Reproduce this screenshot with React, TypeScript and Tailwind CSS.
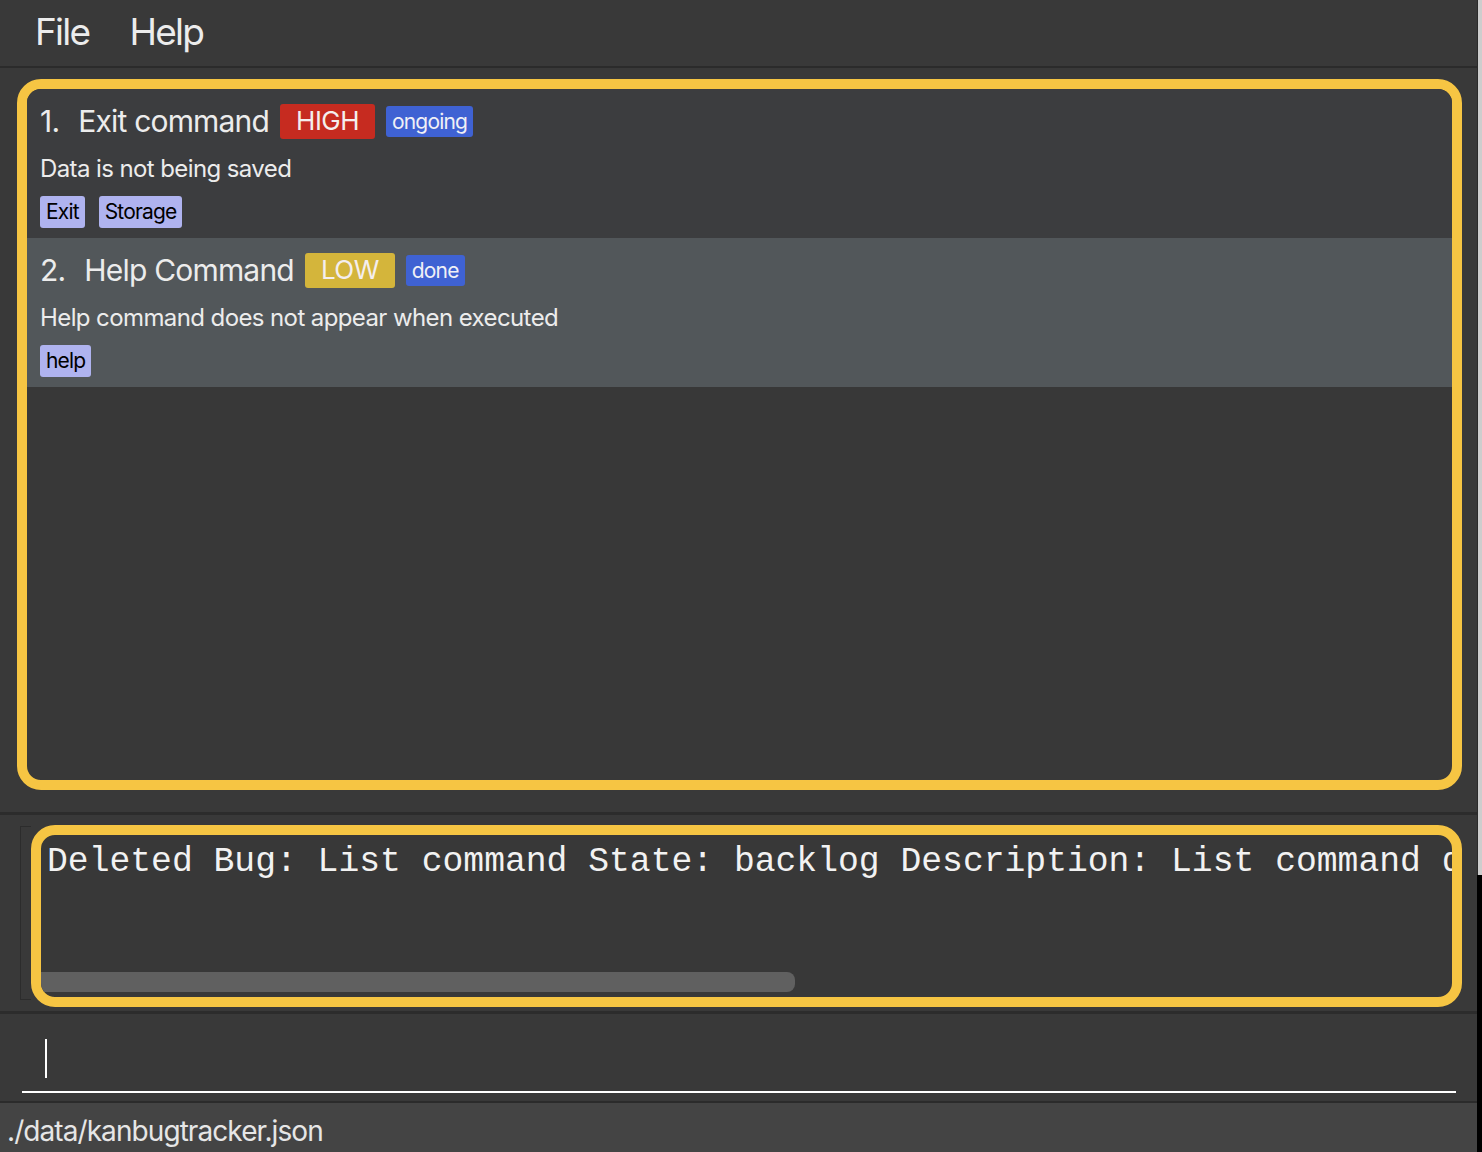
import React from "react";

type Bug = {
  index: number;
  title: string;
  priority: "HIGH" | "LOW";
  state: string;
  description: string;
  tags: string[];
};

const bugs: Bug[] = [
  {
    index: 1,
    title: "Exit command",
    priority: "HIGH",
    state: "ongoing",
    description: "Data is not being saved",
    tags: ["Exit", "Storage"],
  },
  {
    index: 2,
    title: "Help Command",
    priority: "LOW",
    state: "done",
    description: "Help command does not appear when executed",
    tags: ["help"],
  },
];

const sans = "font-['Inter','Noto_Sans',sans-serif]";
const mono = "font-['Liberation_Mono','DejaVu_Sans_Mono',monospace]";

function BugCard({ bug, odd }: { bug: Bug; odd: boolean }) {
  return (
    <div
      className={`flex flex-col pl-[13px] pt-[15px] pb-[10px] ${
        odd ? "bg-[#3c3d3f]" : "bg-[#52575a]"
      }`}
    >
      {/* title row */}
      <div className="flex h-[35px] items-center">
        <span className="text-[30px] leading-none tracking-[-0.027em] text-[#ececec]">
          {bug.index}.
        </span>
        <span className="ml-[19px] text-[30px] leading-none tracking-[-0.027em] text-[#ececec]">
          {bug.title}
        </span>
        <span
          className={`ml-[11px] flex h-[35px] items-center rounded-[3px] px-[16px] text-[26px] leading-none tracking-[-0.02em] text-[#f4eeee] ${
            bug.priority === "HIGH" ? "bg-[#c62b20]" : "bg-[#d4b53b]"
          }`}
        >
          {bug.priority}
        </span>
        <span className="ml-[11px] flex h-[31px] items-center rounded-[3px] bg-[#3f62d3] px-[6px] text-[21px] leading-none tracking-[-0.04em] text-[#f0f0f6]">
          {bug.state}
        </span>
      </div>

      {/* description */}
      <div className="mt-[16px] h-[28px] text-[24px] leading-[28px] tracking-[-0.025em] text-[#ececec]">
        {bug.description}
      </div>

      {/* tags */}
      <div className="mt-[13px] flex gap-[14px]">
        {bug.tags.map((t) => (
          <span
            key={t}
            className="flex h-[32px] items-center rounded-[3px] bg-[#afb3ef] px-[6px] text-[21px] leading-none tracking-[-0.04em] text-black"
          >
            {t}
          </span>
        ))}
      </div>
    </div>
  );
}

export default function App() {
  return (
    <div className={`flex h-[1152px] w-[1482px] overflow-hidden bg-black ${sans}`}>
      <div className="flex w-[1477px] flex-col bg-[#393939]">
        {/* Menu bar */}
        <div className="flex h-[68px] items-center gap-[40px] border-b-2 border-[#2b2b2b] pl-[35px] pb-[2px] text-[37px] tracking-[-0.047em] text-[#ececec]">
          <span>File</span>
          <span>Help</span>
        </div>

        {/* Bug list */}
        <div className="flex pl-[17px] pr-[15px] pt-[11px] pb-[22px] border-b-[3px] border-[#2c2c2c]">
          <div className="flex h-[711px] flex-1 flex-col overflow-hidden rounded-[24px] border-[10px] border-[#f6c543] bg-[#383838]">
            {bugs.map((b, i) => (
              <BugCard key={b.index} bug={b} odd={i % 2 === 0} />
            ))}
          </div>
        </div>

        {/* Result display */}
        <div className="flex h-[200px] items-start pl-[20px] pr-[15px] pt-[10px] border-b-[3px] border-[#2c2c2c]">
          <div className="mt-[1px] h-[174px] w-[11px] border-y border-l border-[#2c2c2c]" />
          <div className="relative flex h-[182px] flex-1 flex-col overflow-hidden rounded-[24px] border-[10px] border-[#f6c543] bg-[#383838]">
            <div
              className={`overflow-hidden whitespace-nowrap pl-[6px] pt-[7px] text-[34.7px] leading-[40px] text-[#f2f2f2] ${mono}`}
            >
              Deleted Bug: List command State: backlog Description: List command d
            </div>
            <div className="mt-auto mb-[5px] h-[20px] w-[754px] rounded-r-[8px] bg-[#606060]" />
          </div>
        </div>

        {/* Command box */}
        <div className="flex h-[90px] flex-col border-b-2 border-[#2b2b2b] pl-[22px] pr-[21px]">
          <div className="mt-[25px] ml-[23px] h-[39px] w-[2px] bg-white" />
          <div className="mt-[13px] h-[2px] w-full bg-white" />
        </div>

        {/* Status bar */}
        <div className="flex flex-1 items-center bg-[#444444] pl-[7px] pt-[7px] text-[28px] tracking-[-0.033em] text-[#e6e6e6]">
          ./data/kanbugtracker.json
        </div>
      </div>

      {/* window edge */}
      <div className="flex w-[5px] flex-col">
        <div className="h-[875px] border-l border-[#2a2a2a] bg-[#cdcdcd]" />
        <div className="flex-1 bg-black" />
      </div>
    </div>
  );
}
